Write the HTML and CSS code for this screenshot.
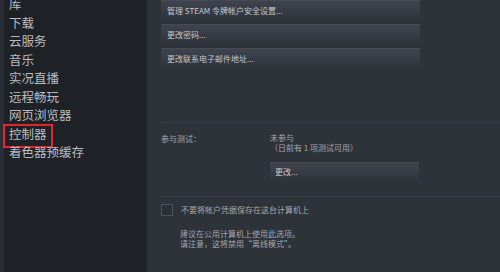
FILE: index.html
```html
<!DOCTYPE html>
<html lang="zh-CN">
<head>
    <meta charset="UTF-8">
    <meta name="viewport" content="width=device-width, initial-scale=1.0">
    <title>帐户设置</title>
    <link rel="stylesheet" href="styles.css">
</head>
<body>
    <div class="edge"></div>

    <ul class="sidebar">
        <li>库</li>
        <li>下载</li>
        <li>云服务</li>
        <li>音乐</li>
        <li>实况直播</li>
        <li>远程畅玩</li>
        <li>网页浏览器</li>
        <li class="active">控制器</li>
        <li>着色器预缓存</li>
    </ul>

    <div class="main">
        <div class="btn-list">
            <button class="btn">管理 STEAM 令牌帐户安全设置...</button>
            <button class="btn">更改密码...</button>
            <button class="btn">更改联系电子邮件地址...</button>
        </div>

        <hr class="sep sep-first">

        <div class="beta">
            <div class="label">参与测试：</div>
            <div class="beta-info">
                <div>未参与</div>
                <div class="sub">（日前有 1 项测试可用）</div>
                <button class="btn btn-change">更改...</button>
            </div>
        </div>

        <hr class="sep">

        <label class="check-row">
            <span class="checkbox"></span>
            <span>不要将帐户凭据保存在这台计算机上</span>
        </label>
        <p class="note">建议在公用计算机上使用此选项。<br>请注意，这将禁用“离线模式”。</p>
    </div>
</body>
</html>
```

FILE: styles.css
```css
body {
    margin: 0;
    height: 272px;
    display: flex;
    overflow: hidden;
    background: #2e3239;
    font-family: "Noto Sans CJK SC", "Liberation Sans", sans-serif;
}
.edge {
    width: 4px;
    background: #2a2d33;
}
/* left menu */
.sidebar {
    width: 142px;
    margin: 0;
    padding: 0;
    list-style: none;
    background: #1e2126;
    border-right: 2px solid #262a30;
}
.sidebar li {
    font-size: 12.5px;
    line-height: 18.5px;
    color: #b9bdc1;
    padding-left: 5px;
    position: relative;
}
.sidebar li:first-child {
    margin-top: -5px;
}
.sidebar li.active::after {
    content: "";
    position: absolute;
    left: -1px;
    top: -1px;
    width: 46px;
    height: 20px;
    border: 2px solid #e3262c;
}
/* right panel */
.main {
    flex: 1;
    padding-left: 13px;
    font-size: 8px;
    color: #a3a8ae;
}
.btn-list {
    display: flex;
    flex-direction: column;
    gap: 5px;
}
.btn {
    display: block;
    width: 259px;
    height: 19px;
    padding: 0 6px;
    text-align: left;
    font-family: inherit;
    font-size: 8px;
    color: #c3c7cc;
    border: none;
    border-top: 1px solid #454a55;
    background: linear-gradient(#3e434e, #30343d);
}
.sep {
    margin: 0;
    border: none;
    border-top: 1px solid #3a3e46;
}
.sep-first {
    margin-top: 55px;
}
.beta {
    display: flex;
    padding-top: 10px;
    line-height: 10px;
}
.label {
    width: 109px;
    padding-top: 1px;
}
.btn-change {
    width: 149px;
    height: 18px;
    margin-top: 9px;
    margin-bottom: 16px;
    padding-left: 5px;
}
.check-row {
    display: flex;
    align-items: center;
    gap: 8px;
    margin-top: 7px;
    line-height: 12px;
}
.checkbox {
    width: 10px;
    height: 10px;
    border: 1px solid #4e525a;
    background: #2b2f36;
}
.note {
    margin: 13px 0 0 19px;
    line-height: 10px;
}
```
